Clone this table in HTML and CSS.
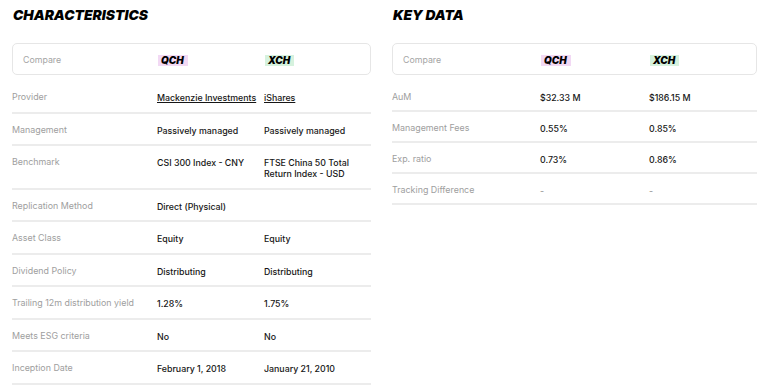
FILE: index.html
```html
<!DOCTYPE html>
<html>
<head>
<meta charset="utf-8">
<link rel="stylesheet" href="styles.css">
</head>
<body>
<div class="page">
  <section class="panel panel-left">
    <h2 class="title">CHARACTERISTICS</h2>
    <div class="compare">
      <span class="compare-label">Compare</span>
      <span><span class="badge badge-q">QCH</span></span>
      <span><span class="badge badge-x">XCH</span></span>
    </div>
    <div class="rows">
      <div class="row"><span class="label">Provider</span><span class="val"><a class="link">Mackenzie Investments</a></span><span class="val"><a class="link">iShares</a></span></div>
      <div class="row"><span class="label">Management</span><span class="val">Passively managed</span><span class="val">Passively managed</span></div>
      <div class="row"><span class="label">Benchmark</span><span class="val">CSI 300 Index - CNY</span><span class="val">FTSE China 50 Total Return Index - USD</span></div>
      <div class="row"><span class="label">Replication Method</span><span class="val">Direct (Physical)</span><span class="val"></span></div>
      <div class="row"><span class="label">Asset Class</span><span class="val">Equity</span><span class="val">Equity</span></div>
      <div class="row"><span class="label">Dividend Policy</span><span class="val">Distributing</span><span class="val">Distributing</span></div>
      <div class="row"><span class="label">Trailing 12m distribution yield</span><span class="val">1.28%</span><span class="val">1.75%</span></div>
      <div class="row"><span class="label">Meets ESG criteria</span><span class="val">No</span><span class="val">No</span></div>
      <div class="row"><span class="label">Inception Date</span><span class="val">February 1, 2018</span><span class="val">January 21, 2010</span></div>
    </div>
  </section>
  <section class="panel panel-right">
    <h2 class="title">KEY DATA</h2>
    <div class="compare">
      <span class="compare-label">Compare</span>
      <span><span class="badge badge-q">QCH</span></span>
      <span><span class="badge badge-x">XCH</span></span>
    </div>
    <div class="rows">
      <div class="row"><span class="label">AuM</span><span class="val">$32.33 M</span><span class="val">$186.15 M</span></div>
      <div class="row"><span class="label">Management Fees</span><span class="val">0.55%</span><span class="val">0.85%</span></div>
      <div class="row"><span class="label">Exp. ratio</span><span class="val">0.73%</span><span class="val">0.86%</span></div>
      <div class="row"><span class="label">Tracking Difference</span><span class="val dash">-</span><span class="val dash">-</span></div>
    </div>
  </section>
</div>
</body>
</html>
```

FILE: styles.css
```css
html, body {
  margin: 0;
  padding: 0;
  background: #ffffff;
}
body {
  font-family: Inter, "Noto Sans", sans-serif;
  color: #1a1a1a;
}
.page {
  display: flex;
  padding: 0 10px 0 12px;
  gap: 21px;
}
.panel-left {
  width: 359px;
}
.panel-right {
  width: 365px;
}
.title {
  margin: 8px 0 0 1px;
  font-family: Inter, sans-serif;
  font-weight: 900;
  font-style: italic;
  font-size: 13.8px;
  line-height: 14px;
  color: #000;
}
.compare {
  margin-top: 21px;
  border: 1px solid #e6e6e6;
  border-radius: 5px;
  display: grid;
  align-items: center;
  box-sizing: border-box;
  height: 32px;
}
.panel-left .compare,
.panel-left .row {
  grid-template-columns: 145px 107px 1fr;
}
.panel-right .compare,
.panel-right .row {
  grid-template-columns: 148px 109px 1fr;
}
.compare-label {
  padding-left: 10px;
  font-size: 8.8px;
  line-height: 11px;
  color: #a5a5a5;
}
.badge {
  display: inline-block;
  font-family: Inter, sans-serif;
  font-weight: 900;
  font-style: italic;
  font-size: 10px;
  line-height: 11px;
  padding: 0 4px 0 3px;
  color: #000;
  vertical-align: middle;
}
.badge-q { background: #f2d9f4; }
.badge-x { background: #d6f2de; }
.rows {
  display: flex;
  flex-direction: column;
  margin-top: 6px;
}
.row {
  display: grid;
  border-bottom: 2px solid #ececec;
  padding: 10px 0 8.5px;
  line-height: 11px;
}
.panel-right .row {
  padding: 9.5px 0 7.5px;
}
.label {
  color: #9e9e9e;
  font-size: 8.9px;
  white-space: nowrap;
}
.val {
  color: #161616;
  font-weight: 500;
  font-size: 8.8px;
  padding-top: 1px;
}
.link {
  text-decoration: underline;
  color: #161616;
  white-space: nowrap;
}
.dash { color: #9e9e9e; }
```
